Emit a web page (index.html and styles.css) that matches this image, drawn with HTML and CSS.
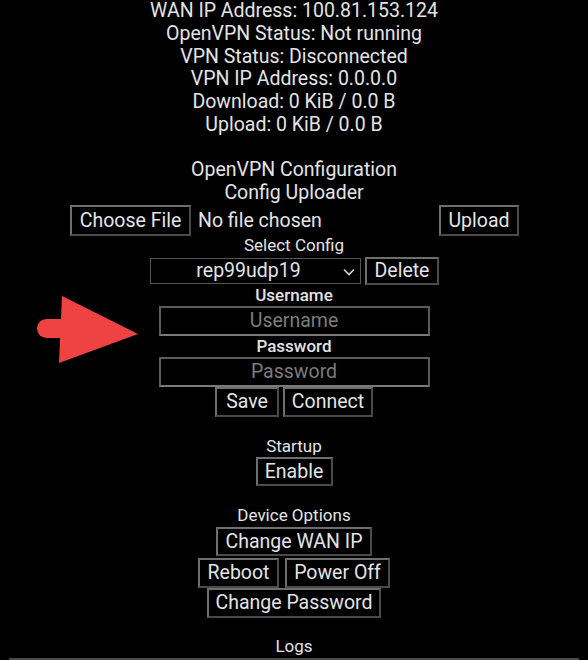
FILE: index.html
```html
<!DOCTYPE html>
<html lang="en">
<head>
<meta charset="utf-8">
<title>OpenVPN Client</title>
<link rel="stylesheet" href="styles.css">
</head>
<body>
<main class="page">
  <section class="status">
    <div>WAN IP Address: 100.81.153.124</div>
    <div>OpenVPN Status: Not running</div>
    <div>VPN Status: Disconnected</div>
    <div>VPN IP Address: 0.0.0.0</div>
    <div>Download: 0 KiB / 0.0 B</div>
    <div>Upload: 0 KiB / 0.0 B</div>
  </section>

  <section class="config">
    <div class="title">OpenVPN Configuration</div>
    <div class="title">Config Uploader</div>
    <div class="file-row">
      <div class="file-picker">
        <span class="btn btn-choose">Choose File</span>
        <span class="file-name">No file chosen</span>
      </div>
      <span class="btn btn-upload">Upload</span>
    </div>
    <div class="label label-select">Select Config</div>
    <div class="select-row">
      <div class="select">
        <span class="select-value">rep99udp19</span>
        <svg class="chev" width="12" height="8" viewBox="0 0 12 8"><path d="M1 1.5 L6 6.5 L11 1.5" fill="none" stroke="#d8d8d8" stroke-width="1.6"/></svg>
      </div>
      <span class="btn btn-delete">Delete</span>
    </div>
    <div class="label label-field">Username</div>
    <div class="input"><span class="placeholder">Username</span></div>
    <div class="label label-field">Password</div>
    <div class="input"><span class="placeholder">Password</span></div>
    <div class="btn-row">
      <span class="btn btn-save">Save</span>
      <span class="btn btn-connect">Connect</span>
    </div>
  </section>

  <section class="startup">
    <div class="label">Startup</div>
    <span class="btn btn-enable">Enable</span>
  </section>

  <section class="device">
    <div class="label">Device Options</div>
    <span class="btn btn-wan">Change WAN IP</span>
    <div class="btn-row btn-row-power">
      <span class="btn btn-reboot">Reboot</span>
      <span class="btn btn-power">Power Off</span>
    </div>
    <span class="btn btn-pass">Change Password</span>
  </section>

  <section class="logs">
    <div class="label">Logs</div>
    <div class="log-box"></div>
  </section>

  <svg class="pointer" width="110" height="72" viewBox="0 0 110 72">
    <rect x="0" y="23" width="34" height="19" rx="9.5" fill="#ef4343"/>
    <polygon points="25,0 22,67 101,38" fill="#ef4343"/>
  </svg>
</main>
</body>
</html>
```

FILE: styles.css
```css
html, body {
  margin: 0;
  padding: 0;
  background: #000;
}

.page {
  position: relative;
  width: 588px;
  height: 660px;
  overflow: hidden;
  color: #e4e4e4;
  font-family: Roboto, "Noto Sans", sans-serif;
  font-size: 19.5px;
  text-align: center;
  display: flex;
  flex-direction: column;
  align-items: center;
}

.status {
  line-height: 22.75px;
}

.config {
  margin-top: 22.75px;
  display: flex;
  flex-direction: column;
  align-items: center;
  width: 100%;
}

.title {
  line-height: 22.75px;
}

.btn {
  box-sizing: border-box;
  display: inline-flex;
  align-items: center;
  justify-content: center;
  height: 30px;
  padding: 0 6px;
  background: #000;
  color: #e4e4e4;
  font-size: 19.5px;
  border: 2px solid;
  border-color: #6e6e6e #4a4a4a #4a4a4a #6e6e6e;
  white-space: nowrap;
}

.file-row {
  margin-top: 0;
  display: flex;
  align-items: center;
  width: 449px;
  margin-left: 1px;
}

.file-picker {
  display: flex;
  align-items: center;
  flex: 1;
}

.btn-choose {
  width: 121px;
  height: 31px;
}

.file-name {
  margin-left: 7px;
}

.btn-upload {
  width: 80px;
  height: 31px;
}

.label {
  font-size: 17px;
  line-height: 16px;
}

.label-select {
  margin-top: 1px;
}

.select-row {
  margin-top: 4px;
  display: flex;
  align-items: center;
  gap: 4px;
  margin-left: 1px;
}

.select {
  box-sizing: border-box;
  width: 211px;
  height: 26px;
  border: 1.5px solid #555;
  display: flex;
  align-items: center;
  position: relative;
  padding-right: 14px;
  justify-content: center;
}

.select-value {
  line-height: 1;
}

.chev {
  position: absolute;
  right: 5px;
  top: 9px;
}

.btn-delete {
  width: 74px;
  height: 28px;
}

.label-field {
  line-height: 20px;
  font-weight: 500;
}

.input {
  box-sizing: border-box;
  width: 271px;
  height: 30px;
  margin-top: 1px;
  border: 2px solid;
  border-color: #5c5c5c #5c5c5c #7a7a7a #5c5c5c;
  display: flex;
  align-items: center;
  justify-content: center;
}

.placeholder {
  color: #7c7c7c;
}

.btn-row {
  display: flex;
  gap: 4px;
}

.btn-save {
  width: 64px;
}

.btn-connect {
  width: 90px;
}

.startup,
.device,
.logs {
  display: flex;
  flex-direction: column;
  align-items: center;
  width: 100%;
}

.startup {
  margin-top: 21px;
}

.btn-enable {
  margin-top: 3px;
  width: 77px;
  height: 29px;
}

.device {
  margin-top: 21px;
}

.btn-wan {
  margin-top: 4px;
  width: 156px;
  height: 29px;
}

.btn-row-power {
  margin-top: 2px;
  gap: 6px;
}

.btn-reboot {
  width: 81px;
}

.btn-power {
  width: 105px;
}

.btn-pass {
  width: 174px;
}

.logs {
  margin-top: 20px;
}

.log-box {
  box-sizing: border-box;
  margin-top: 4px;
  width: 570px;
  height: 40px;
  border: 2px solid #4a4a4a;
}

.pointer {
  position: absolute;
  left: 37px;
  top: 296px;
}
```
